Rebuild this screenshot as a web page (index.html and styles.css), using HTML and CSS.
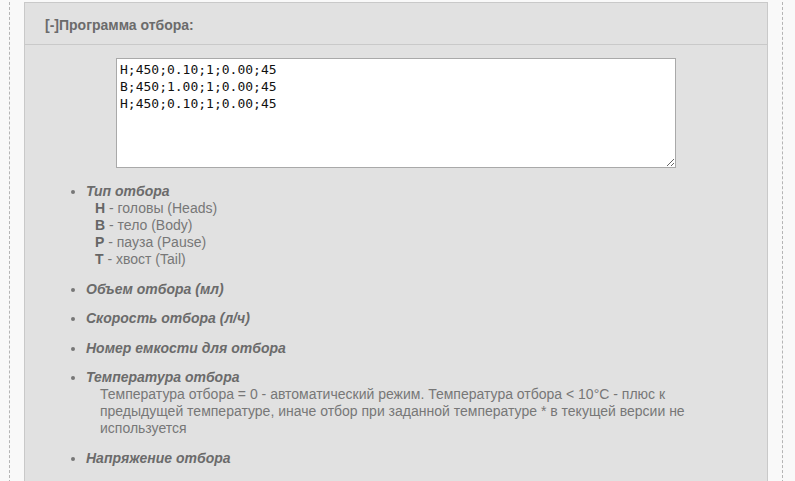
FILE: index.html
```html
<!DOCTYPE html>
<html lang="ru">
<head>
    <meta charset="UTF-8">
    <meta name="viewport" content="width=device-width, initial-scale=1.0">
    <title>Программа отбора</title>
    <link rel="stylesheet" href="styles.css">
</head>
<body>

<div class="page">
    <div class="panel">
        <div class="panel-head">[-]Программа отбора:</div>

        <div class="panel-body">
            <textarea class="program" rows="6">H;450;0.10;1;0.00;45
B;450;1.00;1;0.00;45
H;450;0.10;1;0.00;45</textarea>

            <ul class="help">
                <li>
                    <span class="term">Тип отбора</span>
                    <div class="types">
                        <div><b>H</b> - головы (Heads)</div>
                        <div><b>B</b> - тело (Body)</div>
                        <div><b>P</b> - пауза (Pause)</div>
                        <div><b>T</b> - хвост (Tail)</div>
                    </div>
                </li>
                <li><span class="term">Объем отбора (мл)</span></li>
                <li><span class="term">Скорость отбора (л/ч)</span></li>
                <li><span class="term">Номер емкости для отбора</span></li>
                <li>
                    <span class="term">Температура отбора</span>
                    <div class="desc">Температура отбора = 0 - автоматический режим. Температура отбора &lt; 10°C - плюс к предыдущей температуре, иначе отбор при заданной температуре * в текущей версии не используется</div>
                </li>
                <li><span class="term">Напряжение отбора</span></li>
            </ul>
        </div>
    </div>
</div>

</body>
</html>
```

FILE: styles.css
```css
body {
    margin: 0;
    background-color: #f9f9f9;
    font-family: "Liberation Sans", Arial, sans-serif;
    font-size: 14px;
    color: #777;
}
.page {
    margin: 0 12px 0 9px;
    padding: 0 14px;
    border-left: 1px dashed #b5b5b5;
    border-right: 1px dashed #b5b5b5;
    min-height: 481px;
}
.panel {
    margin-top: 2px;
    background: #e1e1e1;
    border: 1px solid #c9c9c9;
    border-bottom: none;
    min-height: 479px;
}
.panel-head {
    height: 41px;
    line-height: 44px;
    padding-left: 20px;
    font-weight: bold;
    color: #6b6b6b;
    border-bottom: 1px solid #c9c9c9;
}
.panel-body {
    padding-top: 13px;
}
.program {
    display: block;
    box-sizing: border-box;
    width: 560px;
    height: 110px;
    margin: 0 auto;
    padding: 2px 3px;
    border: 1px solid #a9a9a9;
    background: #fff;
    color: #111;
    font-family: "DejaVu Sans Mono", "Liberation Mono", monospace;
    font-size: 13px;
    line-height: 17px;
    resize: both;
}
.help {
    margin: 15px 0 0;
    padding: 0 56px 0 61px;
    line-height: 17px;
}
.help li {
    margin-bottom: 12.5px;
}
.term {
    font-weight: bold;
    font-style: italic;
    color: #6b6b6b;
}
.types {
    padding-left: 9px;
}
.types b {
    color: #666;
}
.desc {
    padding-left: 14px;
}
```
